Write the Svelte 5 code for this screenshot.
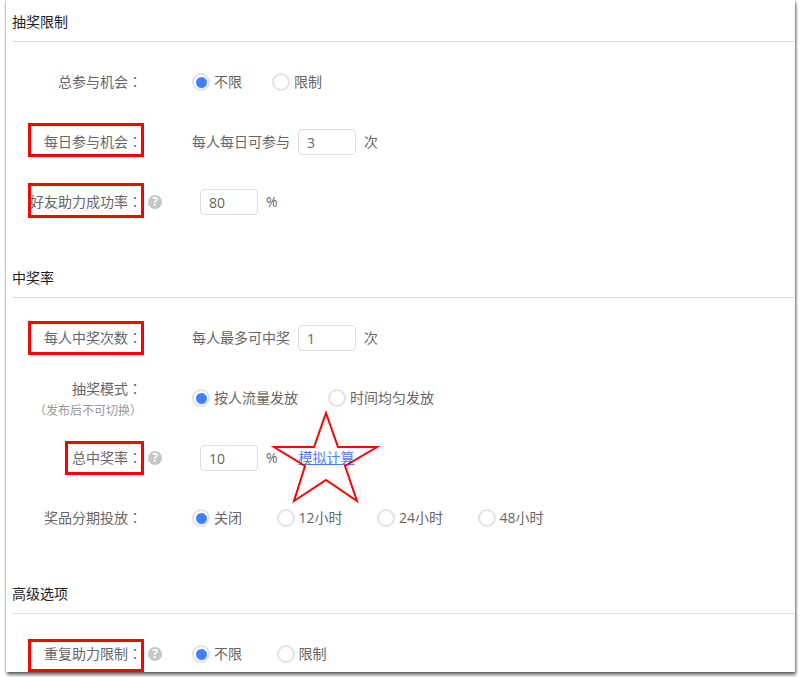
<script>
    const starPoints = "57,5 69,39 108,39 76,58 88,93 57,72 25,93 36,58 5,39 45,39";
</script>

<style>
    :global(body) {
        background: #fff;
    }
    .shell {
        height: 677px;
    }
    .page {
        width: 789px;
        height: 672px;
        margin-left: 6px;
        padding-left: 6px;
        box-sizing: border-box;
        overflow: hidden;
        background: #fff;
        box-shadow: 0 0 2px rgba(0, 0, 0, 0.4), 1px 3px 3px rgba(0, 0, 0, 0.55);
        font-family: "Open Sans", "Noto Sans CJK SC", sans-serif;
        font-size: 14px;
        color: #666;
    }
    .section + .section {
        margin-top: 37px;
    }
    .title {
        height: 20px;
        padding: 12px 0 9px;
        line-height: 20px;
        color: #222;
        border-bottom: 1px solid #ddd;
    }
    .rows {
        display: flex;
        flex-direction: column;
        gap: 26px;
        padding-top: 23px;
    }
    .row {
        display: flex;
        align-items: center;
        height: 34px;
    }
    .label {
        width: 130px;
        flex: none;
        text-align: right;
        line-height: 20px;
        margin-left: -6px;
        padding: 0 0 2px 6px;
        white-space: nowrap;
    }
    .label.two {
        padding-top: 2px;
        padding-bottom: 0;
    }
    .label small {
        display: block;
        font-size: 12px;
        color: #999;
        line-height: 20px;
        margin-top: 1px;
    }
    /* these marks sit centred in their box in the traditional cut */
    .punct {
        font-family: "Noto Sans CJK TC", sans-serif;
    }
    .text {
        position: relative;
        display: inline-block;
    }
    .mark::after {
        content: "";
        position: absolute;
        right: -2px;
        left: -16px;
        top: -8px;
        height: 34px;
        box-sizing: border-box;
        border: 3px solid #f00;
    }
    .mark.full::after {
        left: -2px;
        height: 35px;
    }
    .mark.mid::after {
        top: -6px;
    }
    .mark.narrow::after {
        left: -7px;
    }
    .mark.low::after {
        top: -4px;
        height: 33px;
    }
    .hint-col {
        width: 50px;
        flex: none;
        padding-left: 6px;
        box-sizing: border-box;
        display: flex;
        align-items: center;
    }
    .hint {
        width: 14px;
        height: 14px;
        border-radius: 50%;
        background: #c6c6c6;
        color: #fff;
        font-size: 12px;
        font-weight: 700;
        line-height: 14px;
        text-align: center;
    }
    .control {
        display: flex;
        align-items: center;
        gap: 8px;
        padding-bottom: 2px;
        white-space: nowrap;
    }
    .control.inset {
        margin-left: 8px;
    }
    .radios {
        display: flex;
        gap: 30px;
    }
    .radios.wide {
        gap: 34.5px;
    }
    .radio {
        display: flex;
        align-items: center;
        gap: 4px;
    }
    .dot {
        width: 18px;
        height: 18px;
        margin-top: 2px;
        box-sizing: border-box;
        border: 2px solid #e2e2e2;
        border-radius: 50%;
        display: flex;
        align-items: center;
        justify-content: center;
    }
    .dot.on::after {
        content: "";
        flex: none;
        width: 11px;
        height: 11px;
        border-radius: 50%;
        background: #4080ff;
    }
    input {
        width: 58px;
        height: 26px;
        margin-top: 2px;
        box-sizing: border-box;
        border: 1px solid #ddd;
        border-radius: 4px;
        padding: 0 8px;
        font: inherit;
        color: #666;
    }
    .calc {
        position: relative;
        margin-left: 13px;
    }
    .calc a {
        color: #4d7cfe;
        text-decoration: underline;
    }
    .star {
        position: absolute;
        left: -30px;
        top: -39px;
        pointer-events: none;
    }
</style>

<div class="shell">
<div class="page">
    <section class="section">
        <div class="title">抽奖限制</div>
        <div class="rows">
            <div class="row">
                <div class="label"><span class="text">总参与机会<span class="punct">：</span></span></div>
                <div class="hint-col"></div>
                <div class="control radios">
                    <span class="radio"><i class="dot on"></i>不限</span>
                    <span class="radio"><i class="dot"></i>限制</span>
                </div>
            </div>
            <div class="row">
                <div class="label"><span class="text mark">每日参与机会<span class="punct">：</span></span></div>
                <div class="hint-col"></div>
                <div class="control">每人每日可参与 <input value="3" /> 次</div>
            </div>
            <div class="row">
                <div class="label"><span class="text mark full">好友助力成功率<span class="punct">：</span></span></div>
                <div class="hint-col"><span class="hint">?</span></div>
                <div class="control inset"><input value="80" /> %</div>
            </div>
        </div>
    </section>

    <section class="section">
        <div class="title">中奖率</div>
        <div class="rows">
            <div class="row">
                <div class="label"><span class="text mark mid">每人中奖次数<span class="punct">：</span></span></div>
                <div class="hint-col"></div>
                <div class="control">每人最多可中奖 <input value="1" /> 次</div>
            </div>
            <div class="row">
                <div class="label two">
                    抽奖模式<span class="punct">：</span>
                    <small><span class="punct">（</span>发布后不可切换<span class="punct">）</span></small>
                </div>
                <div class="hint-col"></div>
                <div class="control radios">
                    <span class="radio"><i class="dot on"></i>按人流量发放</span>
                    <span class="radio"><i class="dot"></i>时间均匀发放</span>
                </div>
            </div>
            <div class="row">
                <div class="label"><span class="text mark mid narrow">总中奖率<span class="punct">：</span></span></div>
                <div class="hint-col"><span class="hint">?</span></div>
                <div class="control inset">
                    <input value="10" /> %
                    <span class="calc">
                        <a href="#calc">模拟计算</a>
                        <svg class="star" width="113" height="98" viewBox="0 0 113 98">
                            <polygon points={starPoints} fill="none" stroke="#f00" stroke-width="2" />
                        </svg>
                    </span>
                </div>
            </div>
            <div class="row">
                <div class="label">奖品分期投放<span class="punct">：</span></div>
                <div class="hint-col"></div>
                <div class="control radios wide">
                    <span class="radio"><i class="dot on"></i>关闭</span>
                    <span class="radio"><i class="dot"></i>12小时</span>
                    <span class="radio"><i class="dot"></i>24小时</span>
                    <span class="radio"><i class="dot"></i>48小时</span>
                </div>
            </div>
        </div>
    </section>

    <section class="section">
        <div class="title">高级选项</div>
        <div class="rows">
            <div class="row">
                <div class="label"><span class="text mark low">重复助力限制<span class="punct">：</span></span></div>
                <div class="hint-col"><span class="hint">?</span></div>
                <div class="control radios wide">
                    <span class="radio"><i class="dot on"></i>不限</span>
                    <span class="radio"><i class="dot"></i>限制</span>
                </div>
            </div>
        </div>
    </section>
</div>
</div>
